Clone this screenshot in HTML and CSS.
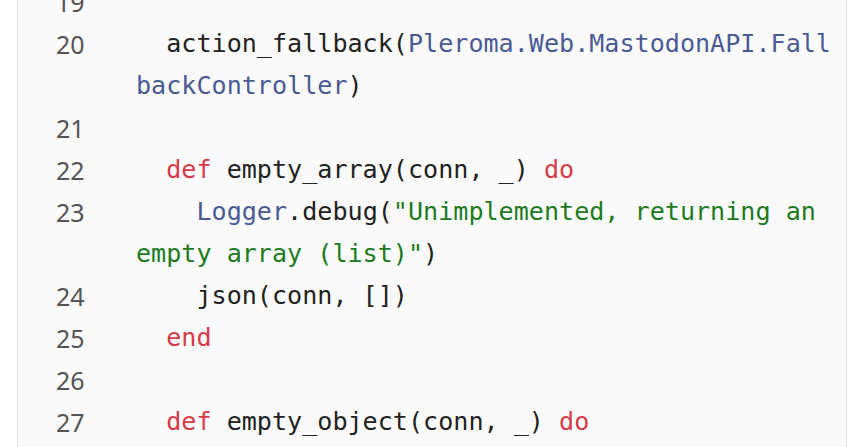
FILE: index.html
```html
<!DOCTYPE html>
<html>
<head>
<meta charset="utf-8">
<link rel="stylesheet" href="styles.css">
</head>
<body>
<div class="code">
  <div class="ln">19</div><div class="src"></div>
  <div class="ln">20</div><div class="src">  action_fallback(<span class="mod">Pleroma.Web.MastodonAPI.FallbackController</span>)</div>
  <div class="ln">21</div><div class="src"></div>
  <div class="ln">22</div><div class="src">  <span class="kw">def</span> empty_array(conn, _) <span class="kw">do</span></div>
  <div class="ln">23</div><div class="src">    <span class="mod">Logger</span>.debug(<span class="str">"Unimplemented, returning an empty array (list)"</span>)</div>
  <div class="ln">24</div><div class="src">    json(conn, [])</div>
  <div class="ln">25</div><div class="src">  <span class="kw">end</span></div>
  <div class="ln">26</div><div class="src"></div>
  <div class="ln">27</div><div class="src">  <span class="kw">def</span> empty_object(conn, _) <span class="kw">do</span></div>
  <div class="ln">28</div><div class="src">    <span class="mod">Logger</span>.debug(<span class="str">"Unimplemented, returning an empty object"</span>)</div>
</div>
</body>
</html>
```
FILE: styles.css
```css
html, body {
  margin: 0;
  padding: 0;
  background: #ffffff;
}
body {
  overflow: hidden;
  height: 447px;
}
.code {
  margin: -19px 0 0 17px;
  width: 830px;
  box-sizing: border-box;
  background: #fafafa;
  border-left: 1px solid #e2e2e2;
  border-right: 1px solid #e2e2e2;
  display: grid;
  grid-template-columns: 80px 702px;
  padding-left: 38px;
  line-height: 42px;
  font-size: 25px;
}
.ln {
  font-family: "Noto Sans", sans-serif;
  color: #555555;
  min-height: 42px;
}
.src {
  font-family: "DejaVu Sans Mono", monospace;
  font-size: 25.1px;
  color: #222222;
  white-space: pre-wrap;
  word-break: break-all;
  min-height: 42px;
}
.kw { color: #d73a49; }
.mod { color: #4a5a94; }
.str { color: #207a1f; }
```
